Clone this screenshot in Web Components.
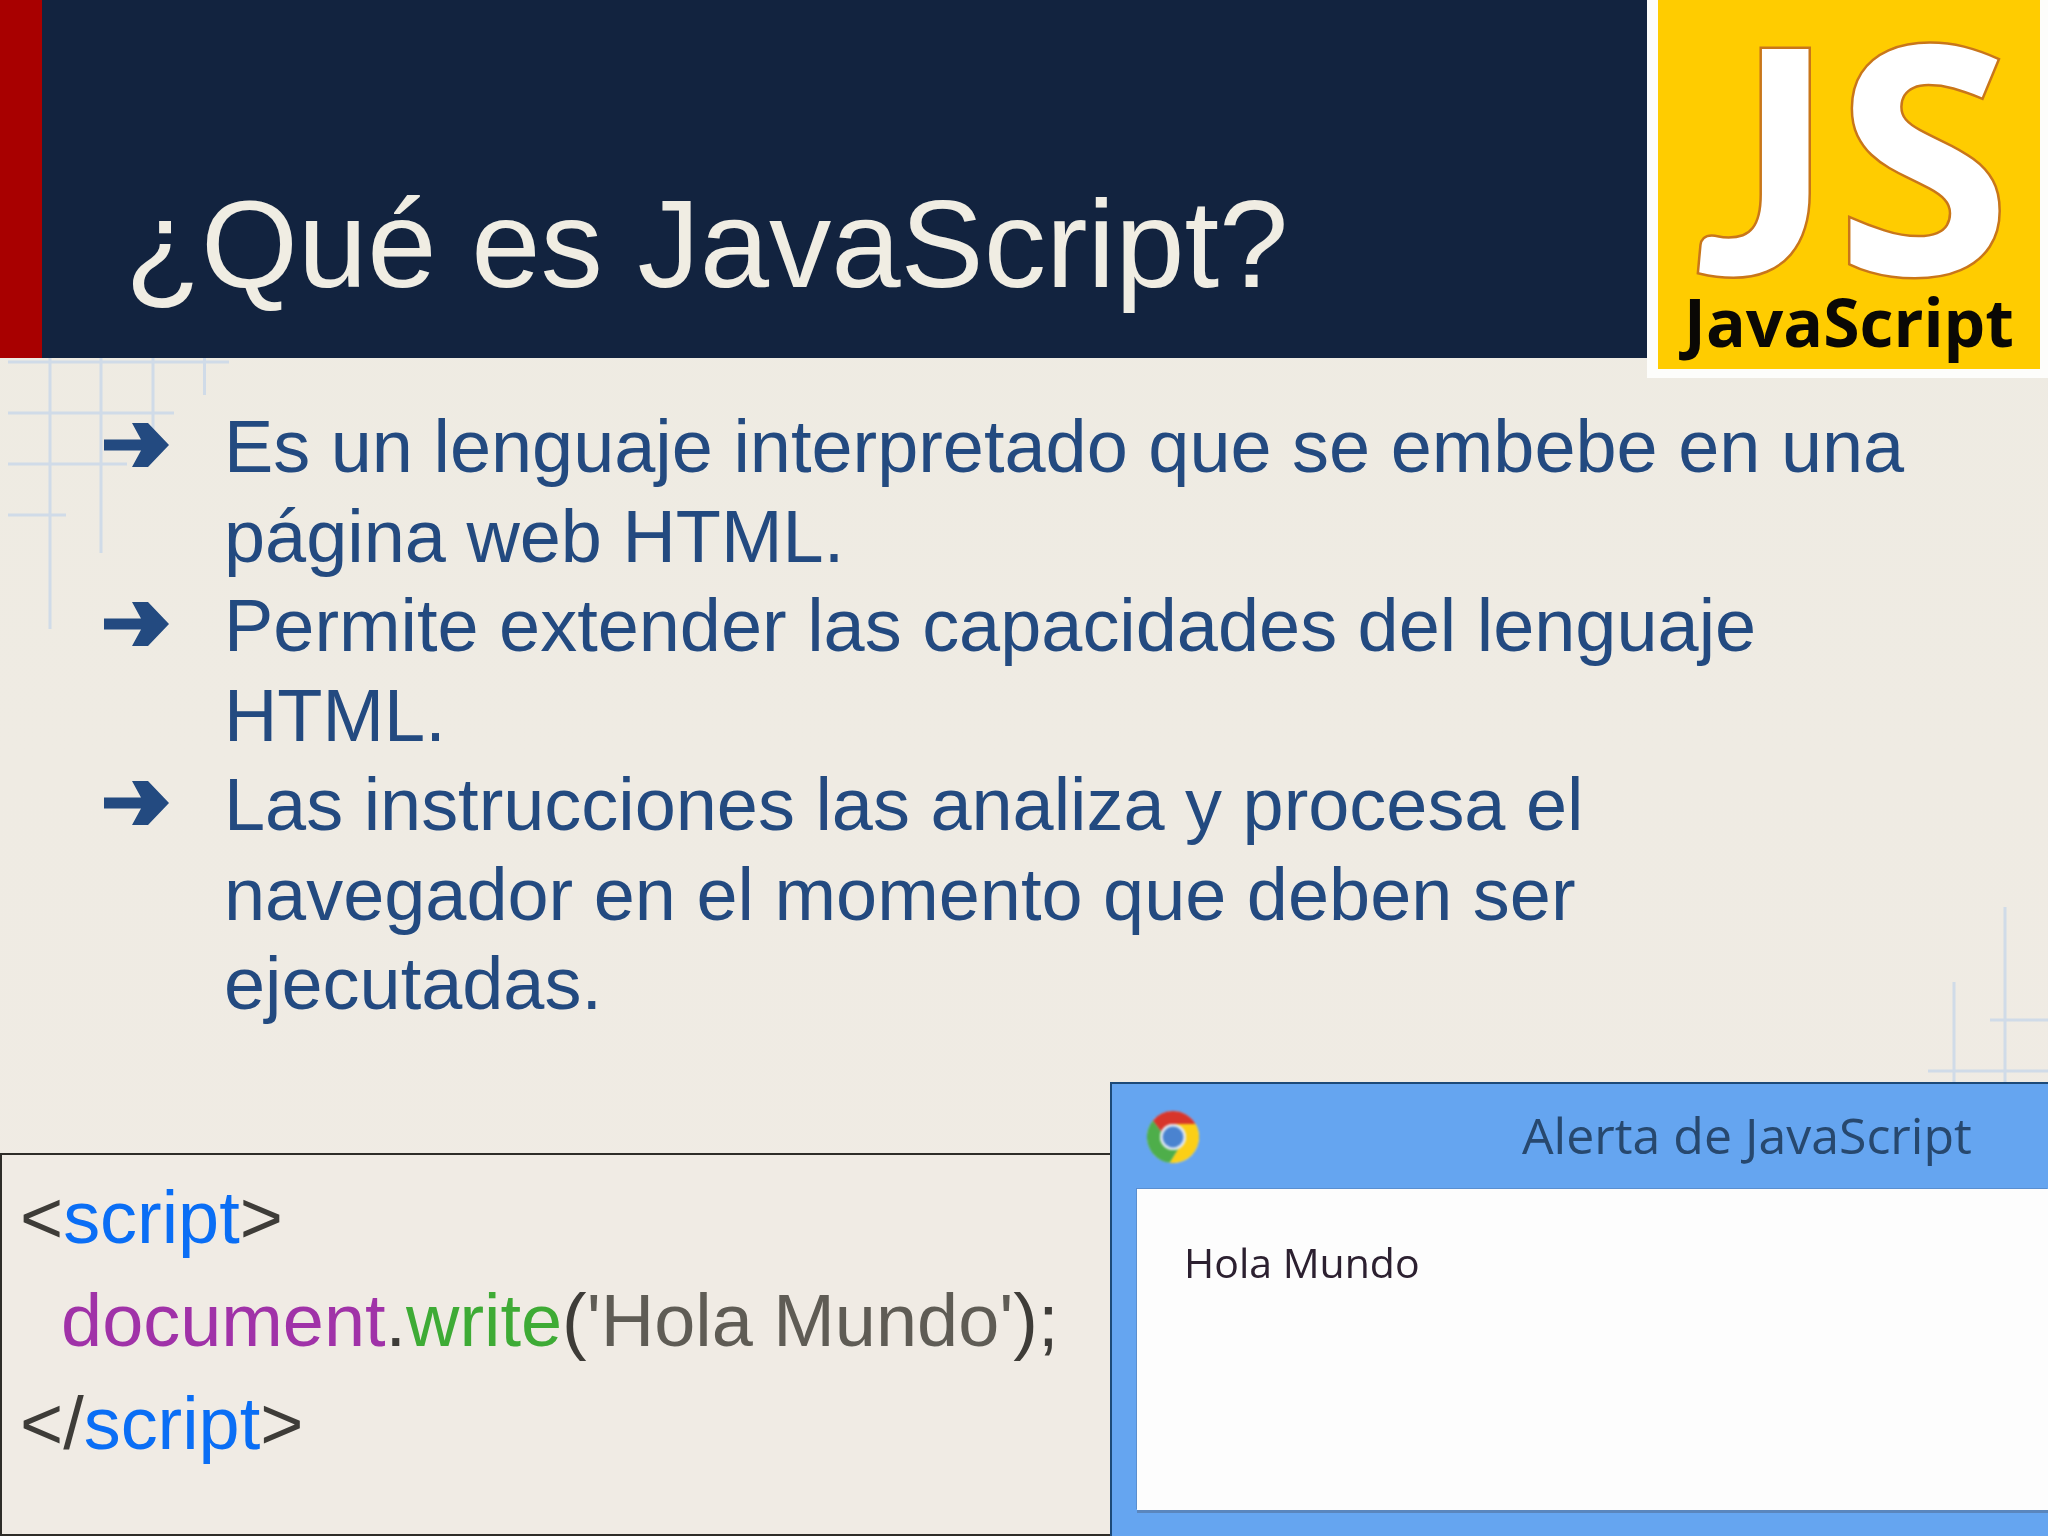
<!DOCTYPE html>
<html>
<head>
<title>¿Qué es JavaScript?</title>
<meta charset="utf-8"/>
<style>
html, body { margin: 0; padding: 0; background: #efece3; }
</style>
</head>
<body>

<js-slide>
  <slide-header slot="header">¿Qué es JavaScript?</slide-header>
  <bullet-item>Es un lenguaje interpretado que se embebe en una página web HTML.</bullet-item>
  <bullet-item>Permite extender las capacidades del lenguaje HTML.</bullet-item>
  <bullet-item>Las instrucciones las analiza y procesa el navegador en el momento que deben ser ejecutadas.</bullet-item>
  <code-box slot="bottom"></code-box>
  <alert-window slot="bottom" caption="Alerta de JavaScript">Hola Mundo</alert-window>
</js-slide>

<script>
class JsSlide extends HTMLElement {
  constructor() {
    super()
    this.attachShadow({mode: 'open'}).innerHTML = `
<style>
:host {
  display: flex;
  flex-direction: column;
  position: relative;
  width: 2048px;
  height: 1536px;
  overflow: hidden;
  background: linear-gradient(#eeebe2, #f0ebe4);
  font-family: "Liberation Sans", Arial, sans-serif;
}
.grid { position: absolute; left: 0; top: 0; }
.list {
  position: relative;
  display: flex;
  flex-direction: column;
  padding: 44px 125px 0 104px;
}
.bottom {
  position: relative;
  display: flex;
  align-items: flex-end;
  margin-top: auto;
}
</style>
<svg class="grid" width="2048" height="1536" fill="none" stroke="#d0dbe8" stroke-width="3">
  <path d="M8 362H229M8 413H174M8 464H127M8 515H66"/>
  <path d="M50 358V629M101 358V553M153 358V450M204.500 358V395"/>
  <path d="M2005 907V1082M1954 982V1082M1990 1020H2048M1928 1071H2048"/>
</svg>
<slot name="header"></slot>
<div class="list"><slot></slot></div>
<div class="bottom"><slot name="bottom"></slot></div>`
  }
}

class SlideHeader extends HTMLElement {
  constructor() {
    super()
    this.attachShadow({mode: 'open'}).innerHTML = `
<style>
:host {
  display: flex;
  position: relative;
  z-index: 1;
  height: 358px;
  background: #12233f;
  border-left: 42px solid #a80000;
}
.title {
  flex: 1;
  align-self: flex-end;
  padding: 0 0 45px 83px;
  color: #f0ede3;
  font-size: 124.600px;
  line-height: 138px;
}
</style>
<div class="title"><slot></slot></div>
<js-logo></js-logo>`
  }
}

class JsLogo extends HTMLElement {
  constructor() {
    super()
    this.attachShadow({mode: 'open'}).innerHTML = `
<style>
:host {
  display: block;
  box-sizing: border-box;
  width: 401px;
  height: 378px;
  padding: 0 8px 9px 11px;
  background: #fdfdfb;
}
.box {
  display: flex;
  flex-direction: column;
  align-items: center;
  height: 100%;
  background: #ffcc00;
  font-family: "Open Sans", sans-serif;
  font-weight: 700;
}
.big {
  height: 285px;
  margin-left: 9px;
  color: #fff;
  font-size: 318px;
  line-height: 302px;
  -webkit-text-stroke: 5px #c9761a;
  paint-order: stroke fill;
  white-space: nowrap;
}
.j {
  margin-right: 6px;
  font-family: Lato, sans-serif;
  font-weight: 900;
  font-size: 310px;
}
.name {
  color: #0a0805;
  font-size: 66px;
  line-height: 72px;
}
</style>
<div class="box">
  <div class="big"><span class="j">J</span>S</div>
  <div class="name">JavaScript</div>
</div>`
  }
}

class BulletItem extends HTMLElement {
  constructor() {
    super()
    this.attachShadow({mode: 'open'}).innerHTML = `
<style>
:host {
  display: flex;
  color: #234a80;
  font-size: 73.900px;
  line-height: 89.500px;
}
svg { flex: none; margin: 21px 55px 0 0; }
</style>
<svg width="65" height="44" viewBox="0 0 65 44"><path fill="#234a80" d="M0 16.500H37L28 0H44L65 22L44 44H28L37 27.500H0Z"/></svg>
<div><slot></slot></div>`
  }
}

class CodeBox extends HTMLElement {
  constructor() {
    super()
    this.attachShadow({mode: 'open'}).innerHTML = `
<style>
:host {
  display: block;
  box-sizing: border-box;
  flex: none;
  width: 1110px;
  height: 383px;
  padding: 12px 0 0 18px;
  border: solid #2e2c28;
  border-width: 2px 0 2px 2px;
  background: #f0ebe4;
  color: #3e3c38;
  font-size: 73.900px;
  line-height: 102.800px;
}
div { white-space: pre; }
.tag { color: #0a6ef5; }
.obj { color: #a032a8; }
.fn { color: #3eab35; }
.str { color: #5f5c55; }
</style>
<div>&lt;<span class="tag">script</span>&gt;</div>
<div>  <span class="obj">document</span>.<span class="fn">write</span>(<span class="str">'Hola Mundo'</span>);</div>
<div>&lt;/<span class="tag">script</span>&gt;</div>`
  }
}

class AlertWindow extends HTMLElement {
  constructor() {
    super()
    this.attachShadow({mode: 'open'}).innerHTML = `
<style>
:host {
  display: flex;
  flex-direction: column;
  box-sizing: border-box;
  flex: 1;
  height: 454px;
  padding-bottom: 26px;
  border: solid #1d4a78;
  border-width: 2px 0 0 2px;
  background: #65a5f0;
  font-family: "Open Sans", sans-serif;
}
.bar {
  display: flex;
  align-items: center;
  height: 105px;
  padding-left: 35px;
}
.caption {
  margin: -3px 0 0 323px;
  color: #27486e;
  font-size: 50px;
  filter: blur(0.6px);
}
svg { flex: none; filter: blur(0.8px); }
.body {
  flex: 1;
  margin-left: 25px;
  padding: 45px 0 0 47px;
  background: #fdfdfd;
  box-shadow: -1px -1px 0 #5a8fd0, 0 3px 0 #5a86bd;
  color: #2c2030;
  font-size: 41px;
  font-weight: 500;
  line-height: 56px;
}
.body div { filter: blur(0.7px); }
</style>
<div class="bar">
  <svg width="52" height="52" viewBox="4 4 40 40">
    <circle cx="24" cy="24" r="20" fill="#fff"/>
    <path fill="#d8352b" d="M24 4A20 20 0 0 1 41.320 14H24A10 10 0 0 0 14.900 19.900L8.500 11.300A20 20 0 0 1 24 4Z"/>
    <path fill="#4eae4a" d="M8.500 11.300A20 20 0 0 0 21.600 43.850L28.300 33A10 10 0 0 1 14.900 19.900Z"/>
    <path fill="#fccf16" d="M41.320 14A20 20 0 0 1 21.600 43.850L28.300 33A10 10 0 0 0 24 14Z"/>
    <circle cx="24" cy="24" r="10" fill="#dfe8f2"/>
    <circle cx="24" cy="24" r="8" fill="#4a83d0"/>
  </svg>
  <span class="caption">${this.getAttribute('caption')}</span>
</div>
<div class="body"><div><slot></slot></div></div>`
  }
}

customElements.define('js-slide', JsSlide)
customElements.define('slide-header', SlideHeader)
customElements.define('js-logo', JsLogo)
customElements.define('bullet-item', BulletItem)
customElements.define('code-box', CodeBox)
customElements.define('alert-window', AlertWindow)
</script>

</body>
</html>
